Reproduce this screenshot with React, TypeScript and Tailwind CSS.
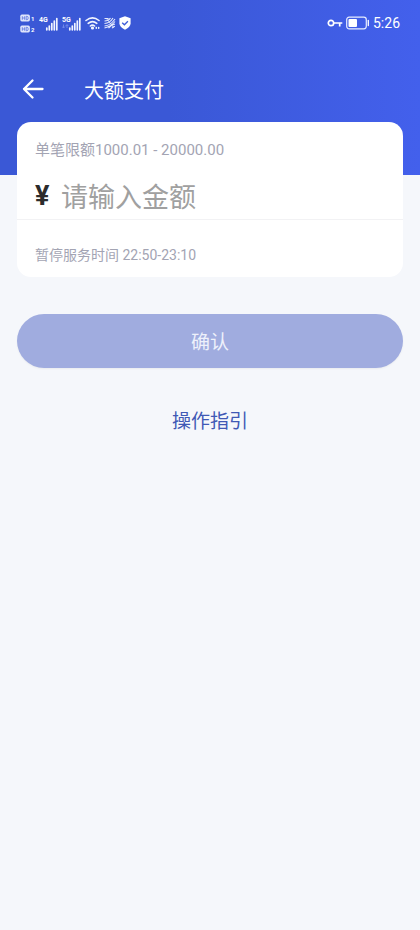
import React from 'react';

const HdIcon = ({ slot }: { slot: string }) => (
  <svg className="w-4 h-2" viewBox="0 0 16 8" aria-hidden="true">
    <rect x="0.3" y="0.6" width="9.6" height="6.8" rx="1.6" fill="#dfe5fb" />
    <path d="M2.3 2.2v3.6M4.7 2.2v3.6M2.3 4h2.4M6.2 2.3v3.4h.8q1.2 0 1.2-1.7t-1.2-1.7z" stroke="#4a66dc" strokeWidth="0.7" fill="none" />
    <text x="11" y="7" fontSize="6" fontWeight="700" fill="#fff">{slot}</text>
  </svg>
);

const SignalIcon = ({ label, sub }: { label: string; sub?: boolean }) => (
  <svg className="w-5 h-4" viewBox="0 0 20 16" aria-hidden="true">
    <text x="0" y="7" fontSize="7" fontWeight="700" fill="#fff">{label}</text>
    {sub && <path d="M1.5 9.500v3M0 11.500l1.500 1.500L3 11.500M5 13v-3M3.700 11L5 9.500l1.300 1.500" stroke="#7d94ee" strokeWidth="0.8" fill="none" />}
    <path d="M7.800 13v1.800M10.300 11v3.800M12.800 8.500v6.300M15.300 6v8.800M17.800 3.500v11.300" stroke="#f2f5ff" strokeWidth="1.700" strokeLinecap="round" />
  </svg>
);

const WifiIcon = () => (
  <svg className="w-4 h-4" viewBox="0 0 16 16" fill="none" stroke="#f2f5ff" strokeWidth="1.600" strokeLinecap="round" aria-hidden="true">
    <path d="M1 5.500q6.500-5.200 13 0M3.200 8.300q4.300-3.500 8.600 0M5.400 11q2.100-1.700 4.200 0" />
    <circle cx="7.500" cy="13" r="0.8" fill="#f2f5ff" />
    <path d="M11.300 12.500v.8M13.700 12.500v.8" strokeWidth="1.500" />
  </svg>
);

const NfcIcon = () => (
  <svg className="w-3 h-3" viewBox="0 0 12 12" fill="none" stroke="#e6ebfd" strokeWidth="1.100" aria-hidden="true">
    <path d="M.5 1.500h4M.5 4q4 0 6-3M.5 6.500Q6 6 9 1M.5 9q6-.5 10.500-7M.5 11Q7 9.500 11 4.500M4.500 11.200Q7 8 11 7M8 11.200q1-1.800 3-2" />
    <path d="M2 1l8 10" strokeWidth="0.8" />
  </svg>
);

const ShieldIcon = () => (
  <svg className="w-3 h-[14px]" viewBox="0 0 12 14" aria-hidden="true">
    <path d="M6 .3L11.600 2.200v5q0 3.900-5.600 6.500Q.4 11.100.4 7.200v-5z" fill="#fff" />
    <path d="M3.200 6.700l2.200 2.100 3.500-3.600" fill="none" stroke="#3d5bd8" strokeWidth="1.300" />
  </svg>
);

const KeyIcon = () => (
  <svg className="w-4 h-3" viewBox="0 0 16 12" fill="none" stroke="#fff" strokeWidth="1.700" aria-hidden="true">
    <circle cx="4" cy="6" r="2.700" />
    <path d="M6.700 6h8.600M12.700 6v3.500" />
  </svg>
);

const BatteryIcon = () => (
  <svg className="w-6 h-[14px]" viewBox="0 0 24 14" aria-hidden="true">
    <rect x="0.7" y="1.200" width="19.600" height="11.600" rx="2.500" fill="none" stroke="#e8edff" strokeWidth="1.200" />
    <rect x="2.500" y="3" width="8.500" height="8" rx="1" fill="#fff" />
    <path d="M22.300 4.500v5" stroke="#fff" strokeWidth="1.300" strokeLinecap="round" />
  </svg>
);

const StatusBar = () => (
  <div className="flex items-center justify-between h-[46px] px-5">
    <div className="flex items-center gap-[3px]">
      <div className="flex flex-col gap-[3px]">
        <HdIcon slot="1" />
        <HdIcon slot="2" />
      </div>
      <SignalIcon label="4G" />
      <SignalIcon label="5G" sub />
      <WifiIcon />
      <NfcIcon />
      <ShieldIcon />
    </div>
    <div className="flex items-center gap-[3px]">
      <KeyIcon />
      <BatteryIcon />
      <span className="text-sm leading-5 text-white">5:26</span>
    </div>
  </div>
);

const App = () => {
  return (
    <div className="min-h-screen bg-[#f5f7fb] font-['Roboto','Noto_Sans_CJK_SC',sans-serif]">
      <header className="bg-linear-to-r from-[#3a58d6] from-40% to-[#4360ec] pb-[65px]">
        <StatusBar />
        <div className="flex items-end h-16 pl-[22px] pb-[7px]">
          <button type="button" aria-label="返回" className="mb-[3px] text-white">
            <svg className="w-[22px] h-[22px]" viewBox="0 0 22 22" fill="none" stroke="currentColor" strokeWidth="2.300" strokeLinecap="round" strokeLinejoin="round">
              <path d="M20.500 11H2M10.500 2.500L2 11l8.500 8.500" />
            </svg>
          </button>
          <h1 className="ml-10 text-xl leading-6 text-white">大额支付</h1>
        </div>
      </header>

      <main className="-mt-[53px] px-[17px]">
        {/* Amount card */}
        <section className="rounded-[14px] bg-white">
          <div className="px-[18px] pt-[18px] pb-px">
            <p className="text-[15px] leading-5 text-[#a3a4b3]">单笔限额1000.01 - 20000.00</p>
            <div className="flex items-center mt-[18px] h-10">
              <label htmlFor="amount" className="w-[26px] pb-1 text-[27px] leading-9 font-bold text-[#2c2c2c]">¥</label>
              <input
                id="amount"
                type="text"
                inputMode="decimal"
                placeholder="请输入金额"
                className="flex-1 min-w-0 h-10 text-[27px] leading-10 bg-transparent outline-none text-[#2c2c2c] placeholder:text-[#a0a0a0]"
              />
            </div>
          </div>
          <p className="px-[18px] pt-[25px] pb-3 border-t border-[#f2f2f4] text-sm leading-5 text-[#a3a4b3]">
            暂停服务时间 22:50-23:10
          </p>
        </section>

        <button
          type="button"
          className="block w-full h-[54px] mt-[37px] pt-1 rounded-full bg-[#a0acdf] text-[19px] leading-7 text-[#eef1fb] shadow-xs"
        >
          确认
        </button>

        <div className="mt-10 text-center">
          <a href="#guide" className="text-[19px] leading-7 text-[#4059b5]">操作指引</a>
        </div>
      </main>
    </div>
  );
};

export default App;
